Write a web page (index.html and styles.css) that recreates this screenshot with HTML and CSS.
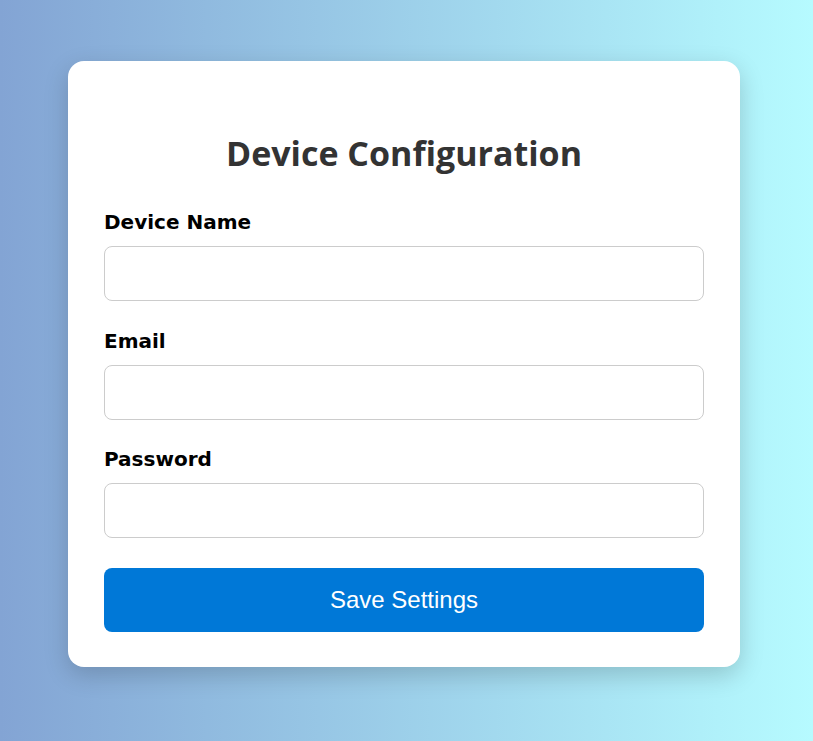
FILE: index.html
```html
<!DOCTYPE html>
<html lang="en">
<head>
<meta charset="utf-8">
<title>Device Configuration</title>
<link rel="stylesheet" href="styles.css">
</head>
<body>
<main class="page">
  <form class="card">
    <h1 class="title">Device Configuration</h1>
    <div class="field">
      <label class="label" for="name">Device Name</label>
      <input class="input" id="name" type="text">
    </div>
    <div class="field">
      <label class="label" for="email">Email</label>
      <input class="input" id="email" type="email">
    </div>
    <div class="field field-last">
      <label class="label" for="pw">Password</label>
      <input class="input" id="pw" type="password">
    </div>
    <button class="button" type="button">Save Settings</button>
  </form>
</main>
</body>
</html>
```
FILE: styles.css
```css
html, body {
  margin: 0;
  height: 100%;
}
body {
  background: linear-gradient(to right, #83a4d4, #b6fbff);
  font-family: "Open Sans", "Noto Sans", sans-serif;
}
.page {
  padding: 61px 0 0 68px;
}
.card {
  box-sizing: border-box;
  width: 672px;
  padding: 36px 36px 35px;
  background: #fff;
  border-radius: 16px;
  box-shadow: 0 8px 24px rgba(0, 0, 0, 0.18);
  display: flex;
  flex-direction: column;
}
.title {
  margin: 34px 0 35px;
  font-size: 34px;
  line-height: 44px;
  font-weight: 700;
  color: #333;
  text-align: center;
}
.field {
  display: flex;
  flex-direction: column;
  margin-bottom: 27.5px;
}
.field-last {
  margin-bottom: 30px;
}
.label {
  font-family: "DejaVu Sans", "Open Sans", sans-serif;
  font-size: 20px;
  line-height: 24px;
  font-weight: 700;
  color: #000;
  margin-bottom: 12px;
}
.input {
  box-sizing: border-box;
  height: 55px;
  border: 1px solid #ccc;
  border-radius: 8px;
  background: #fff;
  font-size: 16px;
  padding: 0 12px;
}
.button {
  height: 64px;
  border: none;
  border-radius: 8px;
  background: #0078d7;
  color: #fff;
  font-family: "Liberation Sans", Arial, sans-serif;
  font-size: 24px;
}
```
